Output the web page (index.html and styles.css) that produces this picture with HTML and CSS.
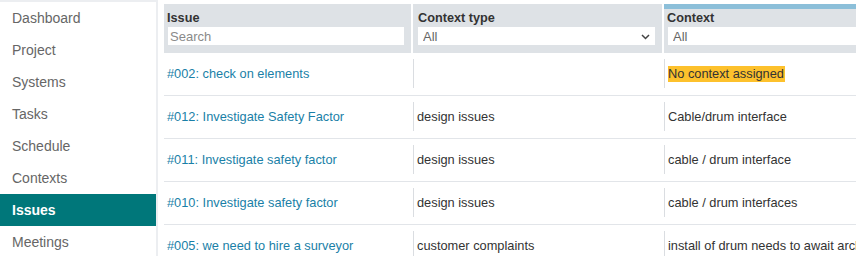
FILE: index.html
```html
<!DOCTYPE html>
<html lang="en">
<head>
<meta charset="utf-8">
<title>Issues</title>
<link rel="stylesheet" href="styles.css">
</head>
<body>
<div class="app">
  <nav class="sidebar">
    <a class="nav-item" href="#">Dashboard</a>
    <a class="nav-item" href="#">Project</a>
    <a class="nav-item" href="#">Systems</a>
    <a class="nav-item" href="#">Tasks</a>
    <a class="nav-item" href="#">Schedule</a>
    <a class="nav-item" href="#">Contexts</a>
    <a class="nav-item active" href="#">Issues</a>
    <a class="nav-item" href="#">Meetings</a>
  </nav>
  <main class="main">
    <div class="issues">
      <div class="row head">
        <div class="th">
          <div class="th-label">Issue</div>
          <input class="search" type="text" placeholder="Search">
        </div>
        <div class="th">
          <div class="th-label">Context type</div>
          <div class="select-wrap">
            <select class="select"><option>All</option></select>
            <svg class="chev" width="9" height="6" viewBox="0 0 9 6"><path d="M1 1l3.5 3.5L8 1" fill="none" stroke="#444" stroke-width="1.5"/></svg>
          </div>
        </div>
        <div class="th sorted">
          <div class="th-label">Context</div>
          <div class="select-wrap wide">
            <select class="select"><option>All</option></select>
          </div>
        </div>
      </div>

      <div class="row">
        <div class="td first"><a class="link" href="#">#002: check on elements</a></div>
        <div class="td"><div class="cell"></div></div>
        <div class="td"><div class="cell"><span class="tag-warn">No context assigned</span></div></div>
      </div>
      <div class="row">
        <div class="td first"><a class="link" href="#">#012: Investigate Safety Factor</a></div>
        <div class="td"><div class="cell">design issues</div></div>
        <div class="td"><div class="cell">Cable/drum interface</div></div>
      </div>
      <div class="row">
        <div class="td first"><a class="link" href="#">#011: Investigate safety factor</a></div>
        <div class="td"><div class="cell">design issues</div></div>
        <div class="td"><div class="cell">cable / drum interface</div></div>
      </div>
      <div class="row">
        <div class="td first"><a class="link" href="#">#010: Investigate safety factor</a></div>
        <div class="td"><div class="cell">design issues</div></div>
        <div class="td"><div class="cell">cable / drum interfaces</div></div>
      </div>
      <div class="row">
        <div class="td first"><a class="link" href="#">#005: we need to hire a surveyor</a></div>
        <div class="td"><div class="cell">customer complaints</div></div>
        <div class="td"><div class="cell">install of drum needs to await architect approval</div></div>
      </div>
    </div>
  </main>
</div>
</body>
</html>
```

FILE: styles.css
```css
* { box-sizing: border-box; }
html, body {
  margin: 0;
  padding: 0;
  overflow: hidden;
  background: #fff;
  font-family: "Liberation Sans", Arial, sans-serif;
  color: #333;
}
.app {
  display: flex;
  align-items: flex-start;
  width: 856px;
  height: 256px;
  overflow: hidden;
}
.sidebar {
  width: 158px;
  flex: none;
  display: flex;
  flex-direction: column;
  border-top: 2px solid #eceef1;
  border-right: 2px solid #eceef1;
  background: #fff;
  height: 256px;
  overflow: hidden;
}
.nav-item {
  display: block;
  flex: none;
  height: 32px;
  line-height: 32px;
  padding-left: 12px;
  font-size: 14px;
  color: #666;
  text-decoration: none;
}
.nav-item.active {
  background: #00777a;
  color: #fff;
  font-weight: bold;
}
.main {
  flex: 1;
  min-width: 0;
  padding: 4px 0 0 6px;
}
.row {
  display: grid;
  grid-template-columns: 247px 249px minmax(0, 1fr);
  column-gap: 2px;
  border-bottom: 1px solid #e2e5e9;
  padding: 6px 0 7px;
}
.row.head {
  padding: 0;
  border-bottom: 0;
}
.th {
  background: #dee2e6;
  border-top: 5px solid #dee2e6;
  padding: 2px 4px 8px 5px;
  overflow: hidden;
}
.th:first-child { padding-left: 3px; }
.th.sorted { border-top-color: #8cbfd9; padding-left: 3px; padding-right: 0; }
.th-label {
  font-size: 12.7px;
  font-weight: bold;
  line-height: 15px;
  color: #333;
  margin-bottom: 1px;
}
.search {
  display: block;
  width: 236px;
  height: 18px;
  margin-left: 1px;
  border: 0;
  padding: 0 2px;
  font-family: inherit;
  font-size: 13px;
  color: #333;
  background: #fff;
  outline: none;
}
.search::placeholder { color: #8a8a8a; }
.select-wrap {
  position: relative;
  width: 237px;
  height: 18px;
}
.select-wrap.wide { width: auto; margin-left: 1px; }
.select {
  display: block;
  width: 100%;
  height: 18px;
  border: 0;
  border-radius: 0;
  padding: 0 0 0 5px;
  appearance: none;
  -webkit-appearance: none;
  background: #fff;
  font-family: inherit;
  font-size: 13px;
  color: #666;
  outline: none;
}
.chev {
  position: absolute;
  right: 5px;
  top: 7px;
}
.td {
  height: 29px;
  display: flex;
  align-items: center;
  font-size: 12.8px;
  white-space: nowrap;
  overflow: hidden;
}
.td.first { padding-left: 3px; }
.cell {
  height: 29px;
  width: 100%;
  border-left: 1px solid #dadde1;
  padding-left: 3px;
  display: flex;
  align-items: center;
  color: #333;
  overflow: hidden;
}
.link {
  color: #1a7fa7;
  text-decoration: none;
}
.tag-warn {
  background: #fdc12c;
  color: #333;
  line-height: 16px;
  padding: 0 1px 0 0;
}
```
